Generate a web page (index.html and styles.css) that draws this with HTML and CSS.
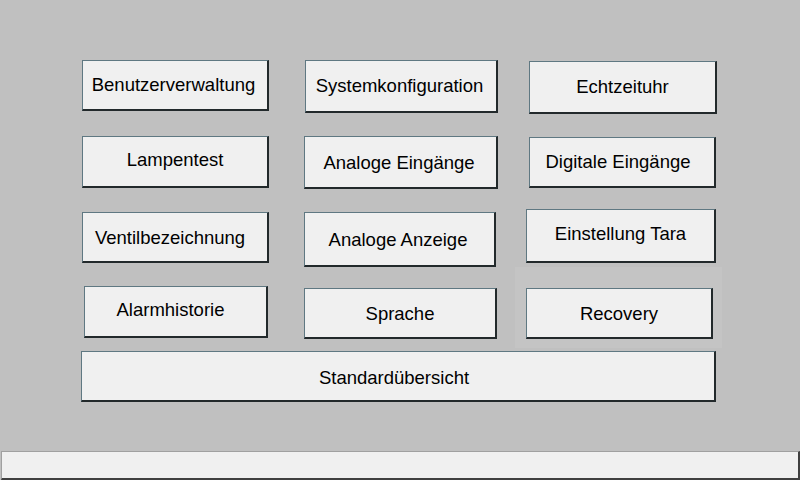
FILE: index.html
```html
<!DOCTYPE html>
<html lang="de">
<head>
<meta charset="utf-8">
<title>Menü</title>
<link rel="stylesheet" href="styles.css">
</head>
<body>
<div class="screen">
  <div class="menu">
    <button class="btn b-benutzer">Benutzerverwaltung</button>
    <button class="btn b-system">Systemkonfiguration</button>
    <button class="btn b-echtzeit">Echtzeituhr</button>

    <button class="btn b-lampen">Lampentest</button>
    <button class="btn b-analog-ein">Analoge Eingänge</button>
    <button class="btn b-digital">Digitale Eingänge</button>

    <button class="btn b-ventil">Ventilbezeichnung</button>
    <button class="btn b-anzeige">Analoge Anzeige</button>
    <button class="btn b-tara">Einstellung Tara</button>

    <button class="btn b-alarm">Alarmhistorie</button>
    <button class="btn b-sprache">Sprache</button>
    <div class="panel">
      <button class="btn b-recovery">Recovery</button>
    </div>

    <button class="btn b-standard">Standardübersicht</button>
  </div>
  <div class="statusbar"></div>
</div>
</body>
</html>
```
FILE: styles.css
```css
html, body {
  margin: 0;
  padding: 0;
}
body {
  width: 800px;
  height: 480px;
  overflow: hidden;
  background: #c0c0c0;
  font-family: "Liberation Sans", Arial, sans-serif;
}
.screen {
  width: 800px;
  height: 480px;
  display: flex;
  flex-direction: column;
}
.menu {
  flex: 1;
  display: grid;
  grid-template-columns: 222px 222px 1fr;
  grid-template-rows: 76px 76px 76px 63px 51px;
  align-items: start;
  padding: 60px 0 0 82px;
}
.btn {
  box-sizing: border-box;
  margin: 0;
  padding: 0;
  display: flex;
  align-items: center;
  justify-content: center;
  background: #f0f0f0;
  color: #000;
  font-family: "Liberation Sans", Arial, sans-serif;
  font-size: 18.5px;
  border-top: 1px solid #5f7882;
  border-left: 1px solid #5f7882;
  border-right: 2px solid #22292b;
  border-bottom: 2px solid #22292b;
  width: 187px;
  height: 51px;
}
.b-benutzer { width: 187px; height: 51px; padding-right: 3px; }
.b-system { margin-left: 1px; width: 193px; height: 53px; padding-right: 3px; }
.b-echtzeit { margin-left: 3px; margin-top: 1px; width: 188px; height: 53px; }
.b-lampen { height: 52px; padding-bottom: 4px; }
.b-analog-ein { width: 194px; height: 53px; padding-top: 2px; padding-right: 3px; }
.b-digital { margin-left: 3px; margin-top: 1px; width: 187px; height: 51px; padding-right: 8px; }
.b-ventil { height: 51px; padding-right: 10px; padding-top: 2px; }
.b-anzeige { width: 192px; height: 55px; padding-top: 2px; padding-right: 3px; }
.b-tara { margin-top: -3px; width: 190px; height: 54px; padding-bottom: 3px; }
.b-alarm { margin-left: 2px; margin-top: -2px; width: 184px; height: 52px; padding-right: 10px; padding-bottom: 3px; }
.b-sprache { margin-top: 0; width: 193px; height: 51px; padding-top: 1px; }
.panel {
  margin-top: -21px;
  margin-left: -11px;
  width: 207px;
  height: 81px;
  box-sizing: border-box;
  padding: 21px 0 0 11px;
  background: #c4c4c4;
}
.b-recovery { width: 187px; height: 51px; padding-top: 1px; }
.b-standard {
  grid-column: 1 / 4;
  margin-left: -1px;
  width: 635px;
  height: 51px;
  padding-top: 3px;
  padding-right: 8px;
}
.statusbar {
  box-sizing: border-box;
  height: 29px;
  margin-left: 1px;
  background: #f0f0f0;
  border-top: 1px solid #a0a0a0;
  border-left: 1px solid #a0a0a0;
  border-right: 2px solid #404040;
  border-bottom: 2px solid #404040;
}
```
